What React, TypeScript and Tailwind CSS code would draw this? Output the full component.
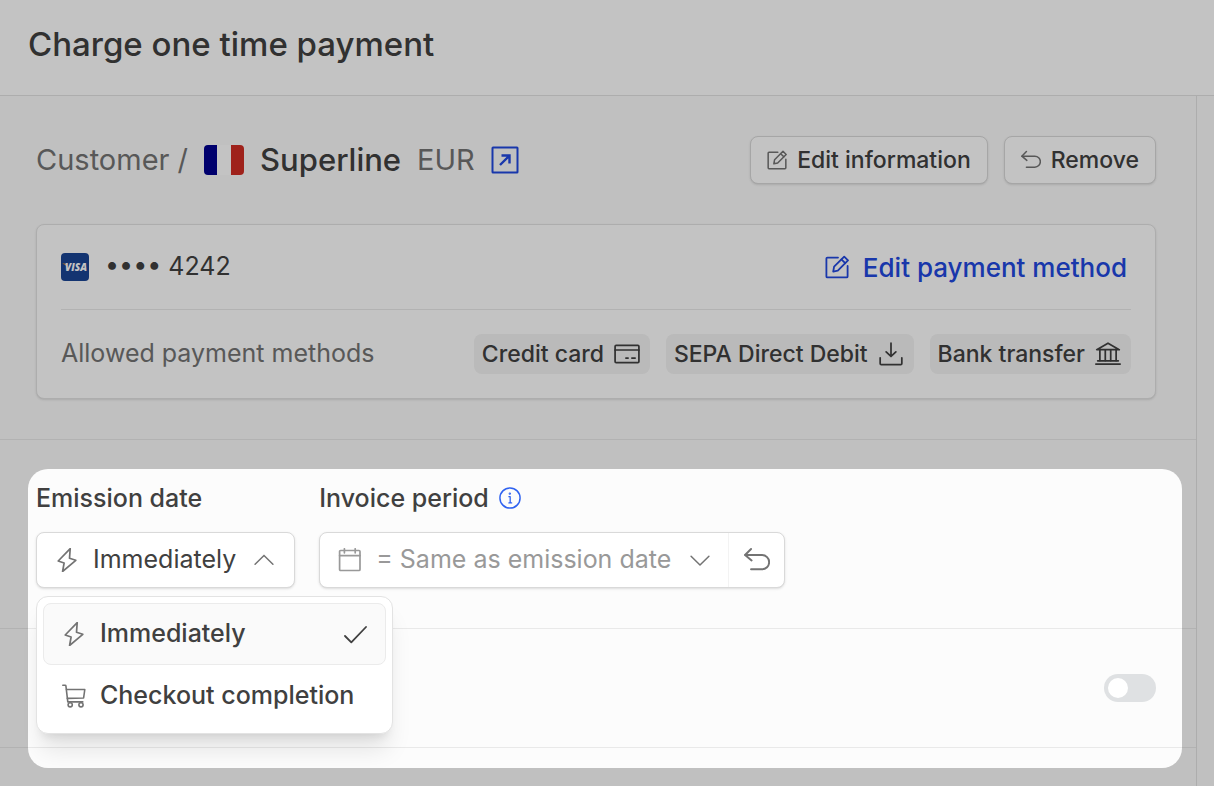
import React, { useState } from "react";

type IconProps = { className?: string };

function Svg({
  className,
  children,
  stroke = 1.6,
}: IconProps & { children: React.ReactNode; stroke?: number }) {
  return (
    <svg
      className={`shrink-0 ${className ?? ""}`}
      viewBox="0 0 24 24"
      fill="none"
      stroke="currentColor"
      strokeWidth={stroke}
      strokeLinecap="round"
      strokeLinejoin="round"
      aria-hidden="true"
    >
      {children}
    </svg>
  );
}

const EditIcon = ({ className }: IconProps) => (
  <Svg className={className} stroke={1.8}>
    <path d="M13 2.6H2.4a1 1 0 0 0-1 1v17.8a1 1 0 0 0 1 1h19.2a1 1 0 0 0 1-1V11" />
    <path d="M8.2 16.6l.9-5L19.2 1.6l3.8 3.8-10.2 10.2z" />
    <path d="M16.4 4.4l3.8 3.8" />
  </Svg>
);

const UndoIcon = ({ className }: IconProps) => (
  <Svg className={className} stroke={1.8}>
    <path d="M6.5 1.8L1 7.4l6 5" />
    <path d="M1.2 7.4h15.4a6.6 6.6 0 0 1 0 13.2H6.5" />
  </Svg>
);

const BoltIcon = ({ className }: IconProps) => (
  <Svg className={className} stroke={1.7}>
    <path d="M15.2.6L3.2 13l5.9 2-1.5 8.5L20.8 12.3l-6.300-2z" />
  </Svg>
);

const CartIcon = ({ className }: IconProps) => (
  <Svg className={className}>
    <path d="M.8 1.2h2.3a.8.8 0 0 1 .8.7L5.800 17.900h15" />
    <path d="M4.5 5.5h18.300l-1.200 8.500-16.300.4" />
    <circle cx="8.2" cy="20.8" r="2.1" />
    <circle cx="19" cy="20.8" r="2.1" />
  </Svg>
);

const ChevronUp = ({ className }: IconProps) => (
  <Svg className={className} stroke={1.8}>
    <path d="M1.3 17L12 6.5 22.7 17" />
  </Svg>
);

const ChevronDown = ({ className }: IconProps) => (
  <Svg className={className} stroke={1.8}>
    <path d="M1.3 7.5L12 18 22.7 7.5" />
  </Svg>
);

const CheckIcon = ({ className }: IconProps) => (
  <Svg className={className} stroke={1.8}>
    <path d="M2 14l6.3 6.3L23 5" />
  </Svg>
);

const CalendarIcon = ({ className }: IconProps) => (
  <Svg className={className} stroke={1.7}>
    <rect x="1.6" y="2.5" width="20.4" height="20" rx="1" />
    <path d="M1.6 7.6h20.4M6.4.8v4M17.2.8v4" />
  </Svg>
);

const InfoIcon = ({ className }: IconProps) => (
  <Svg className={className}>
    <circle cx="12" cy="12" r="11" />
    <path d="M10.8 10.6h1.4v6.6M10.8 17.4h3" strokeWidth="1.4" />
    <circle cx="11.8" cy="7.2" r=".5" fill="currentColor" />
  </Svg>
);

const CardIcon = ({ className }: IconProps) => (
  <Svg className={className}>
    <rect x="1" y="4" width="22" height="16" rx="1" />
    <path d="M1 8.3h22M11 15.8h2M16.5 15.8h3" />
  </Svg>
);

const DownloadIcon = ({ className }: IconProps) => (
  <Svg className={className}>
    <path d="M12 2v12M7.5 10l4.5 4.3 4.5-4.3" />
    <path d="M2 15.5v5.3a1 1 0 0 0 1 1h18a1 1 0 0 0 1-1v-5.3" />
  </Svg>
);

const BankIcon = ({ className }: IconProps) => (
  <Svg className={className}>
    <path d="M.8 21.3h22.4M2.5 18.3h19M1.6 8h20.8L12 2z" />
    <path d="M4.5 8.3v9.8M9.5 8.3v9.8M14.5 8.3v9.8M19.5 8.3v9.8" />
  </Svg>
);

function OpenIcon() {
  return (
    <svg className="h-7 w-7" viewBox="0 0 28 28" fill="none" stroke="currentColor" strokeWidth="2" aria-hidden="true">
      <rect x="1.5" y="1.5" width="25" height="25" rx=".5" />
      <path d="M9 19l9.5-9.5M10.5 9.5h8v8" strokeWidth="2.4" />
    </svg>
  );
}

function FlagFr() {
  return (
    <span className="flex h-[30px] w-10 overflow-hidden rounded" role="img" aria-label="France">
      <span className="flex-1 bg-[#00008f]" />
      <span className="flex-1 bg-white" />
      <span className="flex-1 bg-[#d02d24]" />
    </span>
  );
}

function VisaLogo() {
  return (
    <span className="relative flex h-7 w-7 items-center justify-end overflow-hidden rounded bg-[#1a4494] pr-0.5">
      <svg className="absolute inset-0 h-7 w-7" viewBox="0 0 28 28" aria-hidden="true">
        <path d="M1.5 10.5h3.2l1.3 3.5c-1-1.6-2.5-2.8-4.5-3.3z" fill="#e79a2c" />
      </svg>
      <span className="relative font-['Open_Sans',sans-serif] text-[10px] font-extrabold text-white italic">VISA</span>
    </span>
  );
}

const outlineButton =
  "flex h-12 items-center gap-2.5 rounded-lg border border-[#d9d9d9] bg-white px-4 text-[23px] font-medium shadow-sm";

function Chip({ label, icon }: { label: string; icon: React.ReactNode }) {
  return (
    <li className="flex h-10 items-center gap-2.5 rounded-lg bg-[#f3f3f3] pr-2.5 pl-2 text-[23px] font-medium">
      {label}
      {icon}
    </li>
  );
}

const emissionOptions = [
  { value: "immediately", label: "Immediately", Icon: BoltIcon },
  { value: "checkout", label: "Checkout completion", Icon: CartIcon },
];

export default function App() {
  const [emission, setEmission] = useState("immediately");
  const [open, setOpen] = useState(true);
  const [enabled, setEnabled] = useState(false);

  const selected = emissionOptions.find((o) => o.value === emission)!;

  return (
    <div className="flex min-h-screen flex-col overflow-hidden bg-[#fcfcfc] font-['Inter',sans-serif] text-[#404040]">
      <header className="border-b border-[#e3e3e3] bg-white px-7 pt-5 pb-[27px]">
        <h1 className="text-[33px] leading-12 font-medium">Charge one time payment</h1>
      </header>

      <div className="flex flex-1">
        <main className="min-w-0 flex-1">
          <section className="border-b border-[#e9e9e9] py-10 pr-10 pl-9">
            <div className="flex h-12 items-center justify-between">
              <div className="flex items-center gap-4 text-[29px] text-[#737373]">
                <span>Customer /</span>
                <FlagFr />
                <span className="text-[31px] font-medium text-[#404040]">Superline</span>
                <span>EUR</span>
                <a href="#customer" aria-label="Open customer" className="text-[#2148e0]">
                  <OpenIcon />
                </a>
              </div>
              <div className="flex gap-4">
                <button type="button" className={outlineButton}>
                  <EditIcon className="h-5 w-5 text-[#737373]" />
                  Edit information
                </button>
                <button type="button" className={outlineButton}>
                  <UndoIcon className="h-5 w-5 text-[#737373]" />
                  Remove
                </button>
              </div>
            </div>

            <div className="mt-10 rounded-lg border border-[#e3e3e3] bg-white px-6 shadow-sm">
              <div className="flex h-[84px] items-center justify-between">
                <div className="flex items-center gap-4 text-[25px]">
                  <VisaLogo />
                  <span>•••• 4242</span>
                </div>
                <a
                  href="#payment-method"
                  className="flex items-center gap-3.5 pr-1 text-[26px] font-medium text-[#2148e0]"
                >
                  <EditIcon className="h-6 w-6" />
                  Edit payment method
                </a>
              </div>
              <div className="flex h-[89px] items-center justify-between border-t border-[#e9e9e9]">
                <span className="text-[25px] text-[#737373]">Allowed payment methods</span>
                <ul className="flex gap-4">
                  <Chip label="Credit card" icon={<CardIcon className="h-[26px] w-[26px]" />} />
                  <Chip label="SEPA Direct Debit" icon={<DownloadIcon className="h-[26px] w-[26px]" />} />
                  <Chip label="Bank transfer" icon={<BankIcon className="h-[26px] w-[26px]" />} />
                </ul>
              </div>
            </div>
          </section>

          <div className="relative">
            <section className="flex gap-6 border-b border-[#e9e9e9] px-9 pt-[42px] pb-10">
              <div>
                <span id="emission-label" className="mb-[18px] block text-[25px] leading-8 font-medium">
                  Emission date
                </span>
                <div className="relative">
                  <button
                    type="button"
                    aria-haspopup="listbox"
                    aria-expanded={open}
                    aria-labelledby="emission-label"
                    onClick={() => setOpen(!open)}
                    className="flex h-14 items-center rounded-lg border border-[#d9d9d9] bg-white pr-5 pl-[18px] text-[25px] shadow-sm"
                  >
                    <selected.Icon className="mr-3.5 h-6 w-6 text-[#737373]" />
                    {selected.label}
                    {open ? (
                      <ChevronUp className="ml-[18px] h-5 w-5 text-[#737373]" />
                    ) : (
                      <ChevronDown className="ml-[18px] h-5 w-5 text-[#737373]" />
                    )}
                  </button>
                  {open && (
                    <div
                      role="listbox"
                      aria-labelledby="emission-label"
                      className="absolute top-full left-0 z-10 mt-2 w-[357px] rounded-xl border border-[#e3e3e3] bg-white p-1.5 shadow-xl"
                    >
                      {emissionOptions.map(({ value, label, Icon }) => (
                        <button
                          key={value}
                          type="button"
                          role="option"
                          aria-selected={value === emission}
                          onClick={() => setEmission(value)}
                          className="flex h-[62px] w-full items-center gap-3.5 rounded-lg border border-transparent px-[18px] text-[25px] font-medium aria-selected:border-[#ebebeb] aria-selected:bg-[#fafafa]"
                        >
                          <Icon className="h-6 w-6 text-[#737373]" />
                          {label}
                          {value === emission && <CheckIcon className="ml-auto h-6 w-6" />}
                        </button>
                      ))}
                    </div>
                  )}
                </div>
              </div>

              <div>
                <div className="mb-[18px] flex items-center gap-2.5 text-[25px] leading-8 font-medium">
                  <label htmlFor="invoice-period">Invoice period</label>
                  <InfoIcon className="h-[22px] w-[22px] text-[#2f62f0]" />
                </div>
                <div className="flex h-14 items-center rounded-lg border border-[#d9d9d9] bg-white text-[25px] shadow-sm">
                  <CalendarIcon className="ml-[18px] h-6 w-6 text-[#999999]" />
                  <select id="invoice-period" className="ml-3.5 appearance-none bg-transparent text-[#999999]">
                    <option>= Same as emission date</option>
                  </select>
                  <ChevronDown className="mx-[18px] h-5 w-5 text-[#737373]" />
                  <button
                    type="button"
                    aria-label="Reset invoice period"
                    className="flex h-full w-14 items-center justify-center border-l border-[#f3f3f3]"
                  >
                    <UndoIcon className="h-[26px] w-[26px] text-[#737373]" />
                  </button>
                </div>
              </div>
            </section>

            <section className="flex h-[119px] items-center justify-end border-b border-[#e9e9e9] px-10">
              <input
                type="checkbox"
                role="switch"
                aria-label="Enable"
                checked={enabled}
                onChange={(e) => setEnabled(e.target.checked)}
                className="h-7 w-13 appearance-none rounded-full bg-[#dfe1e3] p-1 before:block before:h-5 before:w-5 before:rounded-full before:bg-white checked:bg-[#2f62f0] checked:before:translate-x-6"
              />
            </section>

            {/* spotlight: dims everything around the section */}
            <div className="pointer-events-none absolute top-[29px] right-3.5 -bottom-5 left-7 z-20 rounded-[20px] shadow-[0_0_0_2000px_rgba(0,0,0,0.235)]" />
          </div>
        </main>
        <aside className="w-[18px] border-l border-[#e3e3e3]" />
      </div>
    </div>
  );
}
